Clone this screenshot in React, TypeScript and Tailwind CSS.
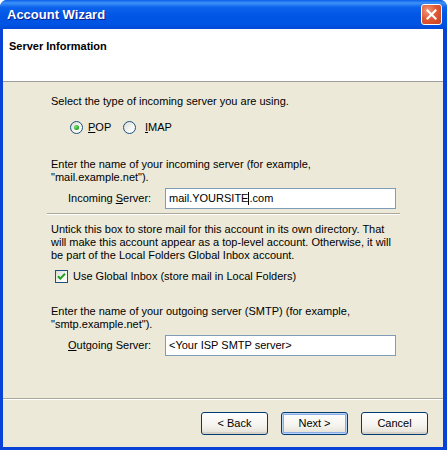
function CloseButton() {
  return (
    <div className="w-[21px] h-[21px] rounded-[3px] border border-white flex items-center justify-center bg-[radial-gradient(circle_at_30%_30%,#F09A7A_0%,#E15A36_45%,#C4401F_100%)]">
      <svg width="11" height="11" viewBox="0 0 11 11">
        <path d="M1.5 1.5 L9.5 9.5 M9.5 1.5 L1.5 9.5" stroke="#fff" strokeWidth="2.2" strokeLinecap="square" />
      </svg>
    </div>
  )
}

function Radio({ checked }: { checked?: boolean }) {
  return (
    <span className="w-[13px] h-[13px] shrink-0 rounded-full border border-[#1C5180] flex items-center justify-center bg-[linear-gradient(135deg,#DCDCD4_0%,#F6F6F4_60%,#FFFFFF_100%)]">
      {checked && (
        <span className="w-[5px] h-[5px] rounded-full bg-[radial-gradient(circle_at_35%_35%,#7BE07A_0%,#2FB22F_55%,#178A17_100%)]" />
      )}
    </span>
  )
}

function Checkbox() {
  return (
    <span className="w-[13px] h-[13px] shrink-0 border border-[#1C5180] flex items-center justify-center bg-[linear-gradient(135deg,#DCDCD4_0%,#F6F6F4_60%,#FFFFFF_100%)]">
      <svg width="9" height="9" viewBox="0 0 9 9">
        <path d="M1 4.2 L3.3 6.6 L8 1.8" fill="none" stroke="#21A121" strokeWidth="2" />
      </svg>
    </span>
  )
}

function Button({ label, primary }: { label: string; primary?: boolean }) {
  return (
    <div
      className={
        'w-[67px] h-[23px] rounded-[3px] border border-[#003C74] flex items-center justify-center bg-[linear-gradient(to_bottom,#FFFFFF_0%,#F4F3EE_60%,#E3E0D5_100%)] ' +
        (primary
          ? 'shadow-[inset_0_0_0_1px_#BCD4F6,inset_0_0_0_2px_#89ADE4]'
          : 'shadow-[inset_0_-2px_0_#D6D0C5]')
      }
    >
      {label}
    </div>
  )
}

export default function App() {
  return (
    <div className="w-[447px] h-[450px] flex flex-col rounded-t-[7px] overflow-hidden bg-[#0842D6] font-['Liberation_Sans',Arial,sans-serif] text-[11px] leading-[13px] text-black">
      <div className="h-[29px] shrink-0 flex items-center pl-[7px] pr-[5px] bg-[linear-gradient(to_bottom,#0A5FEA_0%,#3D92F7_10%,#0D62EC_25%,#0055E5_55%,#0054E3_85%,#0448D6_100%)]">
        <span className="flex-1 text-white font-bold text-[13px] [text-shadow:1px_1px_0_#0A1E8C]">
          Account Wizard
        </span>
        <CloseButton />
      </div>

      <div className="flex-1 flex flex-col ml-[3px] mr-[4px] mb-[3px] bg-[#ECE9D8] min-h-0">
        <div className="h-[53px] shrink-0 bg-white border-b border-[#9D9D9D] pl-[6px] pt-[11px] font-bold">
          Server Information
        </div>

        <div className="flex-1 flex flex-col pl-[48px] pt-[13px]">
          <p>Select the type of incoming server you are using.</p>
          <div className="mt-[13px] flex items-center h-[13px] pl-[19px]">
            <div className="w-[53px] flex items-center gap-[5px]">
              <Radio checked />
              <span>
                <span className="underline">P</span>OP
              </span>
            </div>
            <div className="flex items-center gap-[9px]">
              <Radio />
              <span>
                <span className="underline">I</span>MAP
              </span>
            </div>
          </div>

          <p className="mt-[24px]">
            Enter the name of your incoming server (for example,
            <br />
            "mail.example.net").
          </p>
          <div className="mt-[4px] flex items-center pl-[17px]">
            <span className="w-[97px]">
              Incoming <span className="underline">S</span>erver:
            </span>
            <div className="w-[231px] h-[21px] border border-[#7F9DB9] bg-white flex items-center pl-[3px]">
              mail.YOURSITE<span className="w-px h-[13px] bg-black" />.com
            </div>
          </div>

          <div className="mt-[4px] -ml-[4px] w-[353px] border-t border-[#ACA899] border-b border-b-white" />

          <p className="mt-[8px]">
            Untick this box to store mail for this account in its own directory. That
            <br />
            will make this account appear as a top-level account. Otherwise, it will
            <br />
            be part of the Local Folders Global Inbox account.
          </p>
          <div className="mt-[8px] flex items-center gap-[5px] pl-[4px]">
            <Checkbox />
            <span>Use Global Inbox (store mail in Local Folders)</span>
          </div>

          <p className="mt-[22px]">
            Enter the name of your outgoing server (SMTP) (for example,
            <br />
            "smtp.example.net").
          </p>
          <div className="mt-[4px] flex items-center pl-[17px]">
            <span className="w-[97px]">
              <span className="underline">O</span>utgoing Server:
            </span>
            <div className="w-[231px] h-[21px] border border-[#7F9DB9] bg-white flex items-center pl-[3px]">
              &lt;Your ISP SMTP server&gt;
            </div>
          </div>
        </div>

        <div className="h-[49px] shrink-0 border-t border-[#ACA899] flex flex-col">
          <div className="h-px bg-white" />
          <div className="flex justify-end gap-[13px] pr-[15px] pt-[12px]">
            <Button label="< Back" />
            <Button label="Next >" primary />
            <Button label="Cancel" />
          </div>
        </div>
      </div>
    </div>
  )
}
